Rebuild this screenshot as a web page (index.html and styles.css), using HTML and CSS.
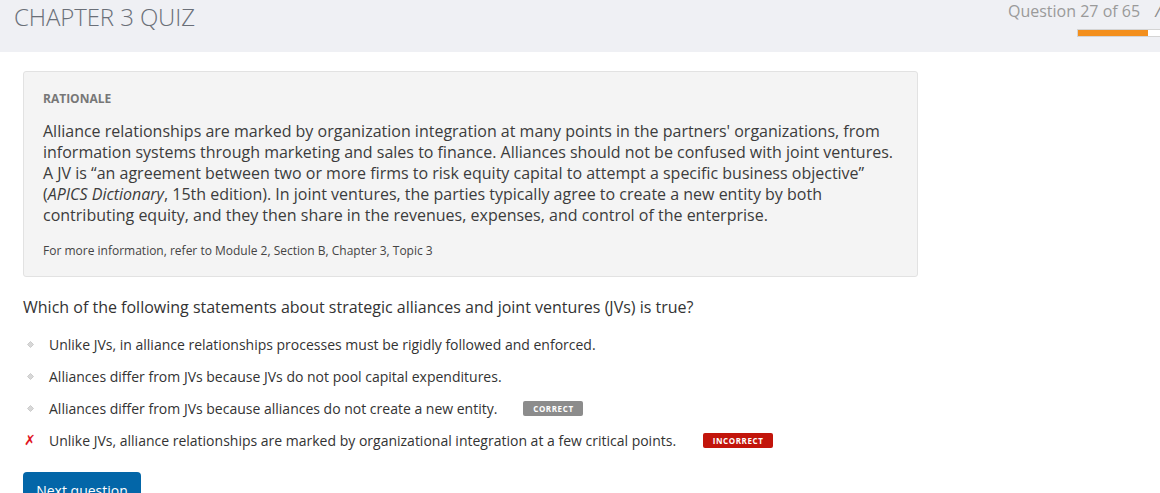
FILE: index.html
```html
<!DOCTYPE html>
<html>
<head>
<meta charset="utf-8">
<link rel="stylesheet" href="styles.css">
</head>
<body>
<header class="topbar">
  <h1 class="title">CHAPTER 3 QUIZ</h1>
  <div class="progress-area">
    <div class="progress-label">Question 27 of 65<span class="cut">/</span></div>
    <div class="progress"><div class="progress-fill" style="width:70px"></div></div>
  </div>
</header>
<main class="content">
  <section class="rationale">
    <div class="rationale-head">RATIONALE</div>
    <p class="rationale-text">Alliance relationships are marked by organization integration at many points in the partners' organizations, from information systems through marketing and sales to finance. Alliances should not be confused with joint ventures. A JV is “an agreement between two or more firms to risk equity capital to attempt a specific business objective” (<em>APICS Dictionary</em>, 15th edition). In joint ventures, the parties typically agree to create a new entity by both contributing equity, and they then share in the revenues, expenses, and control of the enterprise.</p>
    <p class="rationale-ref">For more information, refer to Module 2, Section B, Chapter 3, Topic 3</p>
  </section>
  <p class="question">Which of the following statements about strategic alliances and joint ventures (JVs) is true?</p>
  <ul class="options">
    <li class="option"><span class="mark"><svg width="7" height="7" viewBox="0 0 7 7"><path d="M3.5 0.5 L6.5 3.5 L3.5 6.5 L0.5 3.5 Z" fill="#d8d8d8" stroke="#c4c4c4" stroke-width="0.8"/></svg></span><span class="opt-text">Unlike JVs, in alliance relationships processes must be rigidly followed and enforced.</span></li>
    <li class="option"><span class="mark"><svg width="7" height="7" viewBox="0 0 7 7"><path d="M3.5 0.5 L6.5 3.5 L3.5 6.5 L0.5 3.5 Z" fill="#d8d8d8" stroke="#c4c4c4" stroke-width="0.8"/></svg></span><span class="opt-text">Alliances differ from JVs because JVs do not pool capital expenditures.</span></li>
    <li class="option"><span class="mark"><svg width="7" height="7" viewBox="0 0 7 7"><path d="M3.5 0.5 L6.5 3.5 L3.5 6.5 L0.5 3.5 Z" fill="#d8d8d8" stroke="#c4c4c4" stroke-width="0.8"/></svg></span><span class="opt-text">Alliances differ from JVs because alliances do not create a new entity.</span><span class="badge badge-correct">CORRECT</span></li>
    <li class="option"><span class="mark mark-x">✗</span><span class="opt-text">Unlike JVs, alliance relationships are marked by organizational integration at a few critical points.</span><span class="badge badge-incorrect">INCORRECT</span></li>
  </ul>
  <button class="next-btn">Next question</button>
</main>
</body>
</html>
```
FILE: styles.css
```css
* { box-sizing: border-box; }
html, body { margin: 0; padding: 0; }
body {
  font-family: "Open Sans", "Liberation Sans", sans-serif;
  color: #333;
  background: #fff;
  overflow: hidden;
  width: 1160px;
  height: 493px;
}
.topbar {
  height: 52px;
  background: #eff0f4;
  display: flex;
  justify-content: space-between;
  padding: 0 0 0 14px;
}
.title {
  margin: 0;
  font-weight: 300;
  font-size: 24px;
  line-height: 34px;
  color: #6a6f78;
  letter-spacing: -0.1px;
}
.progress-area {
  display: flex;
  flex-direction: column;
  align-items: flex-start;
  width: 160px;
  overflow: hidden;
}
.progress-label {
  font-size: 16px;
  line-height: 22px;
  color: #9a9a9a;
  white-space: nowrap;
  padding-left: 8px;
}
.cut { font-style: italic; margin-left: 15px; color: #888; }
.progress {
  margin-top: 7px;
  margin-left: 77px;
  width: 90px;
  height: 8px;
  background: #fff;
  border: 1px solid #d4d4d4;
  flex-shrink: 0;
}
.progress-fill { height: 100%; background: #f38f1d; }
.content { padding: 19px 23px 0 23px; }
.rationale {
  width: 895px;
  background: #f4f4f4;
  border: 1px solid #e2e2e2;
  border-radius: 3px;
  padding: 18px 19px 16px 19px;
}
.rationale-head {
  font-size: 12px;
  font-weight: 700;
  color: #777;
  line-height: 18px;
}
.rationale-text {
  margin: 13px 0 0 0;
  font-size: 16px;
  line-height: 21px;
  color: #3c3c3c;
}
.rationale-text em { font-style: italic; }
.rationale-ref {
  margin: 16px 0 0 0;
  font-size: 12px;
  line-height: 18px;
  color: #444;
}
.question {
  margin: 19px 0 0 0;
  font-size: 16px;
  line-height: 22px;
  color: #333;
}
.options {
  list-style: none;
  margin: 16px 0 0 0;
  padding: 0;
  display: flex;
  flex-direction: column;
  gap: 12px;
}
.option {
  display: flex;
  align-items: center;
  height: 20px;
  font-size: 14px;
  color: #333;
}
.mark {
  width: 26px;
  display: flex;
  align-items: center;
  padding-left: 4px;
}
.mark-x {
  color: #e0141e;
  font-size: 14px;
  font-style: italic;
  font-weight: 700;
  padding-left: 1px;
  font-family: "DejaVu Sans", sans-serif;
}
.opt-text { white-space: nowrap; }
.badge {
  display: inline-block;
  font-size: 8px;
  font-weight: 700;
  letter-spacing: 0.6px;
  color: #fff;
  height: 15px;
  line-height: 15px;
  text-align: center;
  border-radius: 2px;
}
.badge-correct { background: #8c8c8c; width: 60px; margin-left: 26px; }
.badge-incorrect { background: #c2150b; width: 70px; margin-left: 27px; }
.next-btn {
  margin-top: 22px;
  width: 118px;
  height: 40px;
  background: #0366a8;
  color: #fff;
  border: none;
  border-radius: 4px;
  font-family: "Open Sans", "Liberation Sans", sans-serif;
  font-size: 14px;
  display: flex;
  justify-content: center;
  padding: 9px 0 0 0;
}
```
